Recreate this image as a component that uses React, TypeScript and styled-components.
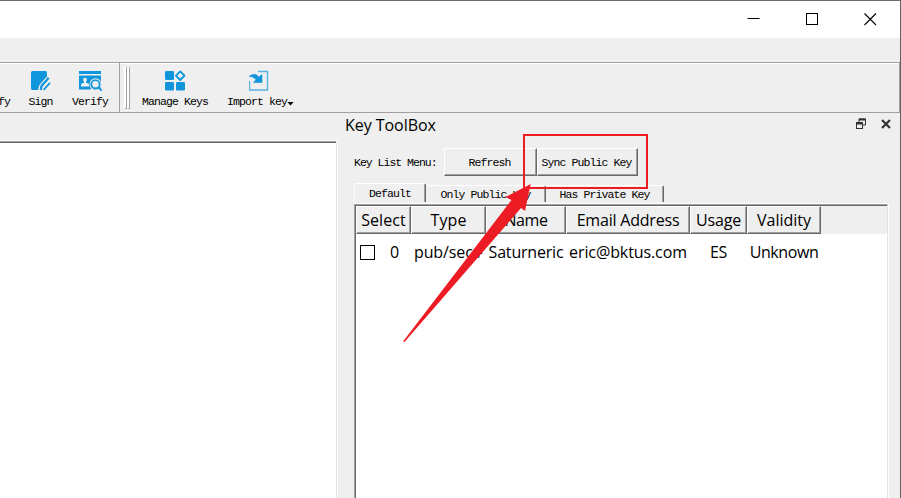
import React from "react";
import styled, { createGlobalStyle } from "styled-components";

const GlobalStyle = createGlobalStyle`
  * { box-sizing: border-box; }
  body { margin: 0; overflow: hidden; background: #efefef; }
`;

const Window = styled.div`
  position: relative;
  display: flex;
  flex-direction: column;
  width: 901px;
  height: 498px;
  overflow: hidden;
  background: #efefef;
  border-top: 1px solid #6b6b6b;
  border-right: 1px solid #5f5f5f;
  color: #000;
  font-family: "Liberation Mono", monospace;
  font-size: 11.5px;
  letter-spacing: -0.9px;
  white-space: pre;
`;

const TitleBar = styled.div`
  height: 37px;
  display: flex;
  justify-content: flex-end;
  background: #fff;
`;

const Caption = styled.div`
  width: 58.5px;
  display: flex;
  align-items: center;
  justify-content: center;
`;

const MenuBar = styled.div`
  height: 24px;
`;

const ToolBar = styled.div`
  height: 51px;
  display: flex;
  border: solid #a0a0a0;
  border-width: 1px 1px 1px 0;
  box-shadow: inset 0 1px #fff;
`;

const ToolGroup = styled.div<{ $w: number }>`
  width: ${(p) => p.$w}px;
  display: flex;
  overflow: hidden;
  border-right: 1px solid #a0a0a0;
`;

const Handle = styled.div`
  width: 10px;
  height: 42px;
  margin-top: 4px;
  display: flex;
  justify-content: flex-end;
  border-left: 4px solid transparent;
`;

const Grip = styled.div`
  width: 3px;
  height: 42px;
  border: solid;
  border-width: 0 1px 1px 2px;
  border-color: #fff #a0a0a0 #a0a0a0 #fff;
`;

const Tool = styled.div<{ $w: number; $shift?: number }>`
  width: ${(p) => p.$w}px;
  margin-left: ${(p) => p.$shift ?? 0}px;
  flex: none;
  display: flex;
  flex-direction: column;
  align-items: center;
  padding-top: 6px;
  svg { display: block; height: 24px; }
`;

const ToolLabel = styled.span`
  display: flex;
  align-items: center;
  height: 14px;
  margin-top: 1px;
`;

const DropArrow = styled.i`
  width: 7px;
  height: 4px;
  margin-top: 5px;
  background: #000;
  clip-path: polygon(0 0, 100% 0, 50% 100%);
`;

const Body = styled.div`
  flex: 1;
  display: flex;
`;

const Editor = styled.div`
  width: 338px;
  margin-top: 27px;
  background: #fff;
  border: solid #fff;
  border-width: 1px 1px 0 0;
  box-shadow: inset -1px 0 #e3e3e3, inset 0 1px #a0a0a0, inset 0 2px #696969;
`;

const Dock = styled.div`
  flex: 1;
  display: flex;
  flex-direction: column;
  padding: 0 11px 0 16px;
`;

const DockTitle = styled.div`
  height: 25px;
  margin: 0 -3px 0 -9px;
  display: flex;
  align-items: center;
  gap: 13px;
  font: 16px/24px "Open Sans", "Noto Sans", sans-serif;
  letter-spacing: -0.05px;
  span { flex: 1; margin-top: -1px; }
  svg { margin-top: -3px; }
`;

const KeyMenu = styled.div`
  height: 28px;
  margin-top: 10px;
  display: flex;
  align-items: center;
`;

const MenuLabel = styled.span`
  width: 90px;
  letter-spacing: -1px;
`;

const Button = styled.div<{ $w: number }>`
  width: ${(p) => p.$w}px;
  height: 28px;
  display: flex;
  align-items: center;
  justify-content: center;
  padding-right: 2px;
  border: solid;
  border-width: 1px;
  border-color: #fff #696969 #696969 #fff;
  box-shadow: inset -1px -1px #a0a0a0;
`;

const Tabs = styled.div`
  height: 18px;
  margin-top: 8px;
  display: flex;
  align-items: flex-end;
`;

const Tab = styled.div<{ $w: number; $active?: boolean }>`
  width: ${(p) => p.$w}px;
  height: ${(p) => (p.$active ? 19 : 17)}px;
  display: flex;
  justify-content: center;
  align-items: center;
  padding-top: 1px;
  border: solid;
  border-width: 1px 1px 0 ${(p) => (p.$active ? 1 : 0)}px;
  border-color: #fff #696969 #fff #fff;
  border-radius: 2px 2px 0 0;
  box-shadow: inset -1px 0 #a0a0a0;
`;

const TableFrame = styled.div`
  flex: 1;
  margin-top: 1px;
  border-top: 1px solid #fff;
  border-right: 1px solid #fff;
`;

const Table = styled.div`
  height: 100%;
  border: solid;
  border-width: 1px 1px 0 1px;
  border-color: #a0a0a0 #e3e3e3 #fff #a0a0a0;
  background: #fff;
  font: 16px/20px "Open Sans", "Noto Sans", sans-serif;
`;

const Inner = styled.div`
  height: 100%;
  border-top: 1px solid #696969;
  border-left: 1px solid #696969;
`;

const Header = styled.div`
  height: 28px;
  display: flex;
  background: #efefef;
`;

const HeaderCell = styled.div<{ $w: number; $ls: number }>`
  width: ${(p) => p.$w}px;
  height: 28px;
  display: flex;
  align-items: center;
  justify-content: center;
  letter-spacing: ${(p) => p.$ls}px;
  border: 1px solid;
  border-color: #fff #696969 #696969 #fff;
  box-shadow: inset -1px -1px #a0a0a0;
`;

const Row = styled.div`
  height: 36px;
  display: flex;
  align-items: center;
`;

const Cell = styled.div<{ $w: number; $ls: number }>`
  width: ${(p) => p.$w}px;
  display: flex;
  align-items: center;
  justify-content: center;
  letter-spacing: ${(p) => p.$ls}px;
`;

const CheckBox = styled.span`
  width: 15px;
  height: 15px;
  margin: 0 15px 0 -8px;
  border: 1px solid #000;
  background: #fff;
`;

const Annotation = styled.svg`
  position: absolute;
  left: 0;
  top: -1px;
  pointer-events: none;
`;

const BLUE = "#1296db";

const columns = [
  { title: "Select", w: 55, ls: 0.1, value: "0", vls: 0 },
  { title: "Type", w: 75, ls: 0.1, value: "pub/sec#", vls: -0.1 },
  { title: "Name", w: 80, ls: -0.4, value: "Saturneric", vls: -0.2 },
  { title: "Email Address", w: 124, ls: -0.2, value: "eric@bktus.com", vls: -0.1 },
  { title: "Usage", w: 57, ls: -0.2, value: "ES", vls: -0.3 },
  { title: "Validity", w: 74, ls: 0, value: "Unknown", vls: -0.4 },
];

const SignIcon = () => (
  <svg width="24" height="24" viewBox="0 0 24 24">
    <path d="M3.5 2H16.5Q18 2 18 3.5V8L10.5 16.5L9.5 21H3.5Q2 21 2 19.5V3.5Q2 2 3.5 2Z" fill={BLUE} />
    <path d="M19.7 8.8L12.5 17L11.6 21" stroke={BLUE} strokeWidth="2.3" fill="none" />
    <path d="M14.5 21L21 13.8" stroke={BLUE} strokeWidth="1.8" />
    <path d="M18.3 7.5L10.6 16.3L9.6 21" stroke="#efefef" strokeWidth="1" fill="none" />
  </svg>
);

const VerifyIcon = () => (
  <svg width="24" height="24" viewBox="0 0 24 24">
    <path d="M1 2H23V5H1ZM1 6.5H23V20.5H1Z" fill={BLUE} />
    <circle cx="7" cy="10.8" r="2" fill="#efefef" />
    <path d="M3 17.5V16Q3 14 5.5 14H8.5Q11 14 11 16V17.5ZM6 11h2v4h-2z" fill="#efefef" />
    <circle cx="17.5" cy="15.3" r="6" fill="#efefef" />
    <path d="M17 20H24V22H13V19Z" fill="#efefef" />
    <circle cx="17.5" cy="15.3" r="4.2" fill="none" stroke={BLUE} strokeWidth="1.9" />
    <path d="M20.5 18.5L23.7 21.7" stroke={BLUE} strokeWidth="1.9" />
  </svg>
);

const ManageIcon = () => (
  <svg width="24" height="24" viewBox="0 0 24 24">
    <g fill={BLUE}>
      <rect x="2" y="2" width="9" height="9" rx="1.3" />
      <rect x="2" y="13" width="9" height="8.5" rx="1.3" />
      <rect x="13" y="13" width="9" height="8.5" rx="1.3" />
    </g>
    <path d="M17.2 2.4L21.5 6.7L17.2 11L12.9 6.7Z" fill="none" stroke={BLUE} strokeWidth="1.9" strokeLinejoin="round" />
  </svg>
);

const ImportIcon = () => (
  <svg width="24" height="24" viewBox="2 0 24 24">
    <path d="M11 2.5H20.5V21H2.5V12" fill="none" stroke="#5ab2e3" strokeWidth="1.4" />
    <path d="M2 7.5Q8 3 12 8L15 5.5V13.5H6.5L9 10.5Q6 7 2 7.5Z" fill={BLUE} stroke={BLUE} strokeWidth=".6" />
  </svg>
);

export default function App() {
  return (
    <>
      <GlobalStyle />
      <Window>
        <TitleBar>
          <Caption><svg width="13" height="13"><path d="M.5 5.5H12.5" stroke="#000" /></svg></Caption>
          <Caption><svg width="13" height="13"><rect x=".5" y=".5" width="11" height="11" fill="none" stroke="#000" shapeRendering="crispEdges" /></svg></Caption>
          <Caption><svg width="13" height="13"><path d="M.5 .5L12 12M12 .5L.5 12" stroke="#000" strokeWidth="1.1" /></svg></Caption>
        </TitleBar>
        <MenuBar />
        <ToolBar>
          <ToolGroup $w={120}>
            <Tool $w={46} $shift={-31}><svg width="24" height="24" /><ToolLabel>Verify</ToolLabel></Tool>
            <Tool $w={51}><SignIcon /><ToolLabel>Sign</ToolLabel></Tool>
            <Tool $w={48}><VerifyIcon /><ToolLabel>Verify</ToolLabel></Tool>
          </ToolGroup>
          <Handle><Grip /><Grip /></Handle>
          <Tool $w={90}><ManageIcon /><ToolLabel>Manage Keys</ToolLabel></Tool>
          <Tool $w={81}>
            <ImportIcon />
            <ToolLabel>Import key<DropArrow /></ToolLabel>
          </Tool>
        </ToolBar>
        <Body>
          <Editor />
          <Dock>
            <DockTitle>
              <span>Key ToolBox</span>
              <svg width="12" height="12"><path d="M4 4V1H10.5V7H8" fill="none" stroke="#333" /><path d="M4 1.5H11" stroke="#333" strokeWidth="2" /><rect x="1.5" y="4.5" width="6" height="6" fill="#efefef" stroke="#333" /><path d="M1 5.5H8" stroke="#333" strokeWidth="2" /></svg>
              <svg width="12" height="12"><path d="M2 2L10 10M10 2L2 10" stroke="#333" strokeWidth="2.2" /></svg>
            </DockTitle>
            <KeyMenu>
              <MenuLabel>Key List Menu:</MenuLabel>
              <Button $w={93}>Refresh</Button>
              <Button $w={101}>Sync Public Key</Button>
            </KeyMenu>
            <Tabs>
              <Tab $w={72} $active>Default</Tab>
              <Tab $w={120}>Only Public Key</Tab>
              <Tab $w={118}>Has Private Key</Tab>
            </Tabs>
            <TableFrame>
              <Table>
                <Inner>
                  <Header>
                    {columns.map((c) => <HeaderCell key={c.title} $w={c.w} $ls={c.ls}>{c.title}</HeaderCell>)}
                  </Header>
                  <Row>
                    {columns.map((c, i) => (
                      <Cell key={c.title} $w={c.w} $ls={c.vls}>{i === 0 && <CheckBox />}{c.value}</Cell>
                    ))}
                  </Row>
                </Inner>
              </Table>
            </TableFrame>
          </Dock>
        </Body>
        <Annotation width="901" height="498">
          <rect x="524" y="135" width="123" height="53" fill="none" stroke="#ed1c24" strokeWidth="2" />
          <path d="M530.7 184L505.5 197L511.5 200L403 341.5L404.5 342L521 208L525 211Z" fill="#ed1c24" />
        </Annotation>
      </Window>
    </>
  );
}
